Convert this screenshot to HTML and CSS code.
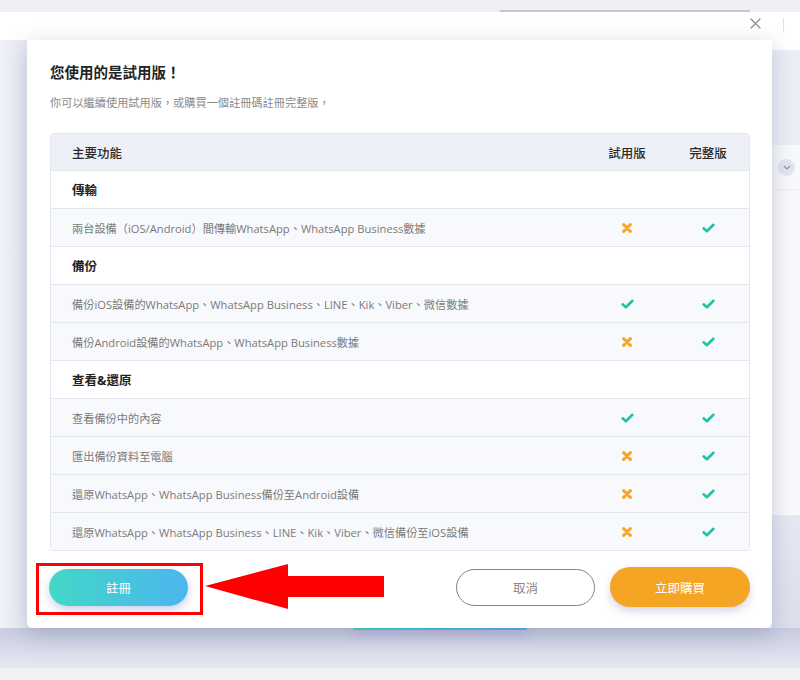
FILE: index.html
```html
<!DOCTYPE html>
<html lang="zh-Hant">
<head>
<meta charset="utf-8">
<title>試用版</title>
<link rel="stylesheet" href="styles.css">
</head>
<body>
<div class="topbar"><div class="scroll"></div></div>
<div class="header">
  <svg class="close" width="11" height="11" viewBox="0 0 11 11"><path d="M1 1L10 10M10 1L1 10" stroke="#8a8f9a" stroke-width="1.3" stroke-linecap="round"/></svg>
  <span class="divider"></span>
</div>
<div class="stage">
  <div class="gutter"></div>
  <div class="modal">
    <h1 class="title">您使用的是試用版！</h1>
    <p class="sub">你可以繼續使用試用版，或購買一個註冊碼註冊完整版，</p>
    <div class="table">
      <div class="row head"><div class="feat">主要功能</div><div class="c">試用版</div><div class="c full">完整版</div></div>
      <div class="row sec"><div class="feat">傳輸</div></div>
      <div class="row item"><div class="feat">兩台設備（iOS/Android）間傳輸WhatsApp、WhatsApp Business數據</div><div class="c"><svg class="x" width="10" height="10" viewBox="0 0 10 10"><path d="M1.6 1.6L8.4 8.4M8.4 1.6L1.6 8.4"/></svg></div><div class="c full"><svg class="ok" width="13" height="10" viewBox="0 0 13 10"><path d="M1.6 5.3L4.9 8.2L11.4 1.8"/></svg></div></div>
      <div class="row sec"><div class="feat">備份</div></div>
      <div class="row item"><div class="feat">備份iOS設備的WhatsApp、WhatsApp Business、LINE、Kik、Viber、微信數據</div><div class="c"><svg class="ok" width="13" height="10" viewBox="0 0 13 10"><path d="M1.6 5.3L4.9 8.2L11.4 1.8"/></svg></div><div class="c full"><svg class="ok" width="13" height="10" viewBox="0 0 13 10"><path d="M1.6 5.3L4.9 8.2L11.4 1.8"/></svg></div></div>
      <div class="row item"><div class="feat">備份Android設備的WhatsApp、WhatsApp Business數據</div><div class="c"><svg class="x" width="10" height="10" viewBox="0 0 10 10"><path d="M1.6 1.6L8.4 8.4M8.4 1.6L1.6 8.4"/></svg></div><div class="c full"><svg class="ok" width="13" height="10" viewBox="0 0 13 10"><path d="M1.6 5.3L4.9 8.2L11.4 1.8"/></svg></div></div>
      <div class="row sec"><div class="feat">查看&amp;還原</div></div>
      <div class="row item"><div class="feat">查看備份中的內容</div><div class="c"><svg class="ok" width="13" height="10" viewBox="0 0 13 10"><path d="M1.6 5.3L4.9 8.2L11.4 1.8"/></svg></div><div class="c full"><svg class="ok" width="13" height="10" viewBox="0 0 13 10"><path d="M1.6 5.3L4.9 8.2L11.4 1.8"/></svg></div></div>
      <div class="row item"><div class="feat">匯出備份資料至電腦</div><div class="c"><svg class="x" width="10" height="10" viewBox="0 0 10 10"><path d="M1.6 1.6L8.4 8.4M8.4 1.6L1.6 8.4"/></svg></div><div class="c full"><svg class="ok" width="13" height="10" viewBox="0 0 13 10"><path d="M1.6 5.3L4.9 8.2L11.4 1.8"/></svg></div></div>
      <div class="row item"><div class="feat">還原WhatsApp、WhatsApp Business備份至Android設備</div><div class="c"><svg class="x" width="10" height="10" viewBox="0 0 10 10"><path d="M1.6 1.6L8.4 8.4M8.4 1.6L1.6 8.4"/></svg></div><div class="c full"><svg class="ok" width="13" height="10" viewBox="0 0 13 10"><path d="M1.6 5.3L4.9 8.2L11.4 1.8"/></svg></div></div>
      <div class="row item"><div class="feat">還原WhatsApp、WhatsApp Business、LINE、Kik、Viber、微信備份至iOS設備</div><div class="c"><svg class="x" width="10" height="10" viewBox="0 0 10 10"><path d="M1.6 1.6L8.4 8.4M8.4 1.6L1.6 8.4"/></svg></div><div class="c full"><svg class="ok" width="13" height="10" viewBox="0 0 13 10"><path d="M1.6 5.3L4.9 8.2L11.4 1.8"/></svg></div></div>
    </div>
    <div class="actions">
      <button class="btn reg">註冊</button>
      <span class="spacer"></span>
      <button class="btn cancel">取消</button>
      <button class="btn buy">立即購買</button>
    </div>
  </div>
  <div class="side">
    <div class="side-top"></div>
    <div class="side-panel">
      <div class="side-row"><span class="chev"><svg width="8" height="5" viewBox="0 0 8 5"><path d="M1 1L4 4L7 1" stroke="#8a90a4" stroke-width="1.1" fill="none"/></svg></span></div>
    </div>
    <div class="side-bottom"></div>
  </div>
</div>
<div class="bottom"><div class="ghost"></div></div>
<div class="footer"></div>

<div class="mark"></div>
<svg class="arrow" width="179" height="45" viewBox="0 0 179 45"><polygon points="0,22 83,0 83,12 179,12 179,33 83,33 83,45" fill="#ff0000"/></svg>
</body>
</html>
```
FILE: styles.css
```css
* { box-sizing: border-box; }
html, body { margin: 0; padding: 0; }
body {
  width: 800px;
  height: 680px;
  overflow: hidden;
  position: relative;
  background: #eef0f6;
  font-family: "Open Sans", "Noto Sans CJK TC", sans-serif;
  color: #333;
}
.topbar {
  height: 12px;
  background: #eeeff3;
  display: flex;
  align-items: flex-end;
}
.scroll {
  margin-left: 500px;
  width: 250px;
  height: 2px;
  background: #c6c7cc;
}
.header {
  height: 28px;
  background: #fff;
  display: flex;
  align-items: center;
  justify-content: flex-end;
  padding-right: 16px;
}
.close { margin-right: 22px; margin-top: -6px; }
.divider {
  width: 1px;
  height: 14px;
  background: #e2e3e8;
  margin-top: -2px;
}
.stage {
  display: grid;
  grid-template-columns: 27px 745px 28px;
  grid-template-rows: 588px;
  height: 588px;
}
.gutter {
  background: linear-gradient(90deg, #f0f2f8, #e8eaf3);
}
.modal {
  background: #fff;
  border-radius: 0 0 6px 6px;
  box-shadow: 0 6px 22px rgba(70, 80, 130, 0.28);
  padding: 23px 22px 20px 23px;
  position: relative;
  z-index: 2;
}
.title {
  margin: 0;
  font-size: 14.5px;
  line-height: 20px;
  font-weight: 700;
  color: #222;
}
.sub {
  margin: 12px 0 0;
  font-size: 11.2px;
  line-height: 16px;
  color: #8a8a8a;
}
.table {
  margin-top: 22px;
  border: 1px solid #e3e6ee;
  border-radius: 4px;
  overflow: hidden;
}
.row {
  display: flex;
  align-items: center;
  height: 38px;
  border-top: 1px solid #e3e6ee;
}
.row.head {
  height: 36px;
  border-top: none;
  background: #eef0f7;
  font-size: 12.5px;
  color: #2a2a2a;
  font-weight: 500;
}
.row.sec {
  background: #fff;
  font-size: 12.5px;
  font-weight: 700;
  color: #222;
}
.row.item {
  background: #f8f9fc;
  font-size: 11.2px;
  color: #7a7a7a;
}
.feat {
  flex: 1;
  padding-left: 21px;
  white-space: nowrap;
}
.c {
  width: 80px;
  display: flex;
  justify-content: center;
  align-items: center;
}
.c.full { width: 82px; }
.x path {
  stroke: #f5a623;
  stroke-width: 3;
  stroke-linecap: round;
}
.ok path {
  stroke: #1ec3a6;
  stroke-width: 2.6;
  fill: none;
  stroke-linecap: round;
  stroke-linejoin: round;
}
.actions {
  display: flex;
  align-items: center;
  margin-top: 16px;
  height: 40px;
}
.spacer { flex: 1; }
.btn {
  height: 37px;
  width: 139px;
  border-radius: 19px;
  border: none;
  font-family: "Open Sans", "Noto Sans CJK TC", sans-serif;
  font-size: 12.5px;
  padding: 0;
  cursor: pointer;
}
.btn.reg {
  margin-left: -1px;
  color: #fff;
  background: linear-gradient(90deg, #42d8c6, #4cb6ef);
  box-shadow: 0 4px 10px rgba(110, 120, 200, 0.35);
}
.btn.cancel {
  background: #fff;
  border: 1.5px solid #7c8598;
  color: #8a8a8a;
}
.btn.buy {
  margin-left: 15px;
  width: 140px;
  height: 40px;
  border-radius: 20px;
  color: #fff;
  background: #f5a524;
  box-shadow: 0 4px 10px rgba(120, 110, 180, 0.3);
}
.side {
  display: flex;
  flex-direction: column;
}
.side-top {
  height: 105px;
  background: linear-gradient(180deg, #fff 0, #fff 10px, #eceef5 10px);
}
.side-panel {
  height: 370px;
  background: #f8f9fb;
}
.side-row {
  height: 45px;
  border-bottom: 1px solid #eceef2;
  display: flex;
  align-items: center;
  padding-left: 6px;
}
.chev {
  width: 17px;
  height: 17px;
  border-radius: 50%;
  background: #e3e6ef;
  display: flex;
  align-items: center;
  justify-content: center;
}
.side-bottom {
  flex: 1;
  background: linear-gradient(180deg, #e6e8f1, #dcdfeb);
}
.bottom {
  height: 40px;
  background: linear-gradient(180deg, #c8cce0, #e6e8f1);
}
.ghost {
  margin-left: 353px;
  width: 174px;
  height: 2px;
  background: linear-gradient(90deg, #42d8c6, #4cb6ef);
  box-shadow: 0 4px 10px rgba(120, 110, 210, 0.6);
}
.footer {
  height: 12px;
  background: #f2f2f5;
}
.mark {
  position: absolute;
  left: 36px;
  top: 563px;
  width: 167px;
  height: 52px;
  border: 3px solid #ff0000;
  z-index: 5;
}
.arrow {
  position: absolute;
  left: 205px;
  top: 564px;
  z-index: 5;
}
```
